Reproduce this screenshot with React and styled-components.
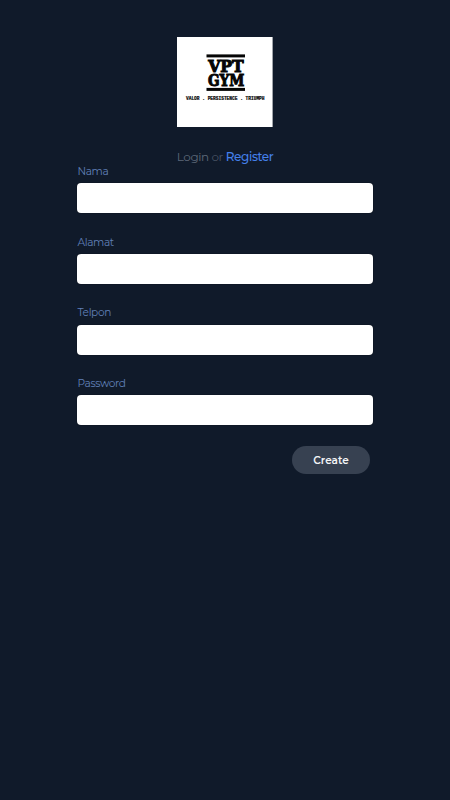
import React from 'react';
import styled, { createGlobalStyle } from 'styled-components';

const GlobalStyle = createGlobalStyle`
  * { box-sizing: border-box; }
  body {
    margin: 0;
    background: #101a2a;
    font-family: Montserrat, Inter, sans-serif;
  }
`;

const Page = styled.main`
  min-height: 800px;
  padding: 37px 77px 0;
  display: flex;
  flex-direction: column;
  align-items: center;
  background: #101a2a;
`;

const Logo = styled.svg`
  display: block;
  width: 96px;
  height: 90px;
`;

const Switcher = styled.nav`
  margin-top: 22px;
  height: 16px;
  line-height: 16px;
  font-size: 12px;
  letter-spacing: -0.4px;
  color: #465061;
  white-space: nowrap;
`;

const SwitchLink = styled.a`
  color: ${(p) => (p.$active ? '#4480ea' : '#5d6878')};
  font-weight: ${(p) => (p.$active ? 500 : 400)};
`;

const Form = styled.form`
  width: 296px;
  display: flex;
  flex-direction: column;
`;

const Field = styled.label`
  display: flex;
  flex-direction: column;
  height: 70.6px;
`;

const Label = styled.span`
  height: 18.4px;
  padding-left: 0.5px;
  line-height: 13px;
  font-size: 10.6px;
  letter-spacing: -0.38px;
  color: #6080b8;
`;

const Input = styled.input`
  width: 100%;
  height: 30px;
  padding: 0 10px;
  border: 0;
  border-radius: 4px;
  background: #fff;
  box-shadow: 0 0 1px #03060c;
  outline: none;
  font: inherit;
`;

const CreateButton = styled.button`
  align-self: flex-end;
  width: 78px;
  height: 28px;
  margin: -1.2px 3px 0 0;
  padding: 1px 0 0;
  border: 0;
  border-radius: 14px;
  background: #374151;
  color: #f3f4f6;
  font-family: inherit;
  font-size: 10.5px;
  font-weight: 600;
  line-height: 27px;
`;

const fields = ['Nama', 'Alamat', 'Telpon', 'Password'];

function GymLogo() {
  return (
    <Logo viewBox="0 0 96 90" role="img" aria-label="VPT Gym">
      <rect width="95.6" height="90" fill="#fff" />
      <g fill="#050505" fontFamily="'DejaVu Serif', serif" fontWeight="700">
        <rect x="29.5" y="17.4" width="38.5" height="3" />
        <text x="31.2" y="34.5" fontSize="16" textLength="35.6" lengthAdjust="spacingAndGlyphs" stroke="#050505" strokeWidth="1">VPT</text>
        <text x="30.9" y="48.7" fontSize="16" textLength="36.4" lengthAdjust="spacingAndGlyphs" stroke="#050505" strokeWidth="1">GYM</text>
        <rect x="29.5" y="50.9" width="38.5" height="3" />
        <text x="9" y="62.8" fontSize="5" textLength="78.5" lengthAdjust="spacingAndGlyphs" stroke="#050505" strokeWidth="0.2" fontFamily="'Liberation Mono', monospace">VALOR . PERSISTENCE . TRIUMPH</text>
      </g>
    </Logo>
  );
}

export default function App() {
  return (
    <>
      <GlobalStyle />
      <Page>
        <GymLogo />
        <Switcher>
          <SwitchLink>Login</SwitchLink> or <SwitchLink $active>Register</SwitchLink>
        </Switcher>
        <Form>
          {fields.map((name) => (
            <Field key={name}>
              <Label>{name}</Label>
              <Input type={name === 'Password' ? 'password' : 'text'} />
            </Field>
          ))}
          <CreateButton type="button">Create</CreateButton>
        </Form>
      </Page>
    </>
  );
}
